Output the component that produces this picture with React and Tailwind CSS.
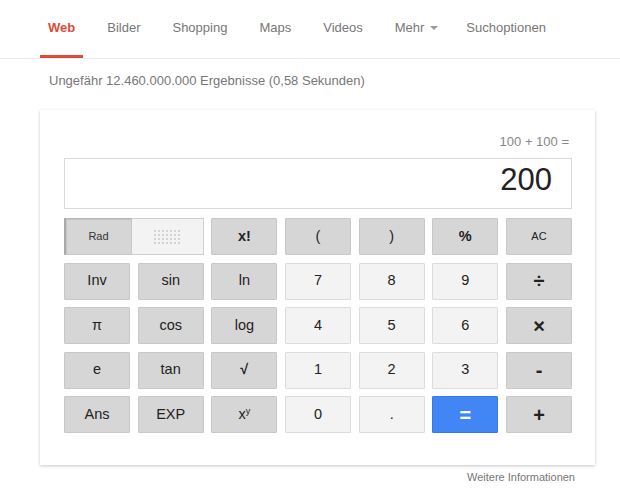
import React from 'react';

const navItems = ['Web', 'Bilder', 'Shopping', 'Maps', 'Videos', 'Mehr', 'Suchoptionen'];

// kind: g = grey function key, l = light digit key, b = blue
const keys = [
  { label: 'x!', kind: 'g', bold: true },
  { label: '(', kind: 'g' },
  { label: ')', kind: 'g' },
  { label: '%', kind: 'g', bold: true },
  { label: 'AC', kind: 'g', small: true },
  { label: 'Inv', kind: 'g' },
  { label: 'sin', kind: 'g' },
  { label: 'ln', kind: 'g' },
  { label: '7', kind: 'l' },
  { label: '8', kind: 'l' },
  { label: '9', kind: 'l' },
  { label: '÷', kind: 'g', bold: true, big: true },
  { label: 'π', kind: 'g' },
  { label: 'cos', kind: 'g' },
  { label: 'log', kind: 'g' },
  { label: '4', kind: 'l' },
  { label: '5', kind: 'l' },
  { label: '6', kind: 'l' },
  { label: '×', kind: 'g', bold: true, big: true },
  { label: 'e', kind: 'g' },
  { label: 'tan', kind: 'g' },
  { label: '√', kind: 'g', bold: true },
  { label: '1', kind: 'l' },
  { label: '2', kind: 'l' },
  { label: '3', kind: 'l' },
  { label: '-', kind: 'g', bold: true, big: true },
  { label: 'Ans', kind: 'g' },
  { label: 'EXP', kind: 'g' },
  { label: 'xy', kind: 'g', sup: true },
  { label: '0', kind: 'l' },
  { label: '.', kind: 'l' },
  { label: '=', kind: 'b', bold: true, big: true },
  { label: '+', kind: 'g', bold: true, big: true },
];

function Dots() {
  const dots = [];
  for (let r = 0; r < 4; r++) {
    for (let c = 0; c < 7; c++) {
      dots.push(<rect key={r + '-' + c} x={c * 4} y={r * 4} width="2" height="2" fill="#d2d2d2" />);
    }
  }
  return (
    <svg width="26" height="14" viewBox="0 0 26 14">
      {dots}
    </svg>
  );
}

function Key({ k }) {
  let cls = 'flex items-center justify-center h-[37px] border rounded-[1px] ';
  if (k.kind === 'g') cls += 'bg-[#d6d6d6] border-[#c8c8c8] text-[#222]';
  if (k.kind === 'l') cls += 'bg-[#f3f3f3] border-[#dcdcdc] text-[#222]';
  if (k.kind === 'b') cls += 'bg-[#4285f4] border-[#3b78e7] text-white';
  let txt = k.small ? 'text-[11px]' : k.big ? 'text-[20px] leading-none' : 'text-[14.5px]';
  if (k.bold) txt += ' font-bold';
  return (
    <div className={cls}>
      {k.sup ? (
        <span className="text-[14.5px]">
          x<sup className="text-[9px]">y</sup>
        </span>
      ) : (
        <span className={txt}>{k.label}</span>
      )}
    </div>
  );
}

export default function App() {
  return (
    <div className="w-[620px] h-[488px] bg-white overflow-hidden font-['Liberation_Sans',Arial,sans-serif]">
      <div className="h-[59px] border-b border-[#ebebeb] flex pl-[40px] gap-4">
        {navItems.map((n, i) => (
          <div
            key={n}
            className={
              'h-full px-2 pt-[20px] text-[13px] leading-[16px] ' +
              (i === 0 ? 'border-b-[3px] border-[#dd4b39] text-[#dd4b39] font-bold ' : 'text-[#777] ') +
              (n === 'Mehr' ? '-mr-[4px]' : '')
            }
          >
            {n}
            {n === 'Mehr' && (
              <span className="inline-block ml-[6px] mb-[2px] align-middle w-0 h-0 border-l-[4px] border-r-[4px] border-t-[4px] border-l-transparent border-r-transparent border-t-[#999]" />
            )}
          </div>
        ))}
      </div>

      <div className="pl-[49px] mt-[14px] text-[13px] leading-[16px] text-[#777]">
        Ungefähr 12.460.000.000 Ergebnisse (0,58 Sekunden)
      </div>

      <div className="ml-[40px] mt-[21px] w-[555px] h-[355px] bg-white shadow-[0_1px_3px_rgba(0,0,0,0.22)] pl-[24px] pr-[23px] pt-[24px]">
        <div className="text-right pr-[3px] text-[13px] leading-[16px] text-[#878787]">100 + 100 =</div>
        <div className="mt-[8px] h-[51px] border border-[#d9d9d9] flex items-center justify-end pr-[19px] pb-[8px] text-[31px] leading-none text-[#222]">
          200
        </div>
        <div className="mt-[9px] w-[508px] grid grid-cols-7 gap-x-[7.6px] gap-y-[7.5px]">
          <div className="col-span-2 flex h-[37px]">
            <div className="w-[68px] h-full flex items-center justify-center bg-[#d6d6d6] border border-[#c8c8c8] border-l-[#a8a8a8] border-t-[#b4b4b4] border-l-2 shadow-[inset_1px_1px_1px_rgba(0,0,0,0.08)] text-[11px] text-[#333]">
              Rad
            </div>
            <div className="flex-1 h-full flex items-center justify-center bg-[#f3f3f3] border border-l-0 border-[#d0d0d0]">
              <Dots />
            </div>
          </div>
          {keys.map((k, i) => (
            <Key key={i} k={k} />
          ))}
        </div>
      </div>

      <div className="mt-[5px] text-right pr-[45px] text-[11px] leading-[14px] text-[#777]">Weitere Informationen</div>
    </div>
  );
}
